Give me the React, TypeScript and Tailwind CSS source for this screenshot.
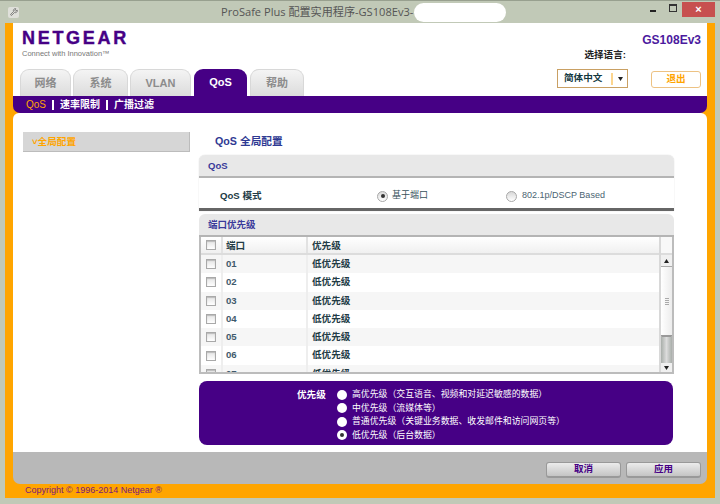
import { Wrench } from "lucide-react";

const cjk = "font-['Liberation_Sans','Noto_Sans_CJK_SC',sans-serif]";

const tabs = [
  { label: "网络", w: "w-[51px]" },
  { label: "系统", w: "w-[55px]" },
  { label: "VLAN", w: "w-[61px]" },
  { label: "QoS", w: "w-[53px] ml-[1px]", active: true },
  { label: "帮助", w: "w-[54px] ml-[1px]" },
];

const ports = ["01", "02", "03", "04", "05", "06", "07"];

const priorities = [
  { label: "高优先级（交互语音、视频和对延迟敏感的数据）" },
  { label: "中优先级（流媒体等）" },
  { label: "普通优先级（关键业务数据、收发邮件和访问网页等）" },
  { label: "低优先级（后台数据）", checked: true },
];

function Checkbox() {
  return <span className="block h-[10px] w-[10px] border border-[#a9a9a9] bg-gradient-to-b from-[#e4e4e4] to-white shadow-[inset_0_1px_1px_#bbb]" />;
}

function Radio({ checked }: { checked?: boolean }) {
  return (
    <span className="flex h-[11px] w-[11px] items-center justify-center rounded-full border border-[#a8a8a8] bg-gradient-to-b from-[#d8d8d8] to-white">
      {checked && <span className="h-[4px] w-[4px] rounded-full bg-[#333]" />}
    </span>
  );
}

function PanelHeader({ children }: { children: React.ReactNode }) {
  return (
    <div className="flex h-[23px] shrink-0 items-center rounded-t-[6px] border-b-2 border-[#b4b4b4] bg-[#e8e8e8] pl-[9px] pt-[2px] text-[9.5px] font-bold text-[#3a3a9a]">
      {children}
    </div>
  );
}

function Bevel({ children }: { children: React.ReactNode }) {
  return (
    <button className="flex h-[16px] w-[75px] items-center justify-center rounded-[3px] border border-b-2 border-[#999] bg-gradient-to-b from-[#ececec] to-[#c4c4c4] text-[9.5px] font-bold text-[#460085]">
      {children}
    </button>
  );
}

function Scrollbar() {
  return (
    <div className="flex w-[13px] flex-col border-l-2 border-[#d8d8d8] bg-[#efefef] text-[#222]">
      <div className="h-[18px] border-b-2 border-[#dcdcdc] bg-[#f8f8f8]" />
      <div className="flex h-[12px] items-center justify-center border-b border-[#aaa] bg-[#f0f0f0]">
        <svg width="5" height="4" viewBox="0 0 5 4"><path d="M2.5 0 5 4H0z" fill="#222" /></svg>
      </div>
      <div className="flex h-[70px] flex-col items-center justify-center gap-px rounded-b-[1px] border-b-2 border-[#999] bg-gradient-to-r from-white to-[#ececec]">
        <span className="h-px w-[4px] bg-[#aaa]" />
        <span className="h-px w-[4px] bg-[#aaa]" />
        <span className="h-px w-[4px] bg-[#aaa]" />
        <span className="h-px w-[4px] bg-[#aaa]" />
      </div>
      <div className="flex-1 bg-gradient-to-r from-[#a9aeaa] via-[#dcdcdc] to-[#a9aeaa]" />
      <div className="flex h-[9px] items-center justify-center bg-[#f0f0f0]">
        <svg width="5" height="4" viewBox="0 0 5 4"><path d="M0 0h5L2.5 4z" fill="#222" /></svg>
      </div>
    </div>
  );
}

export default function App() {
  return (
    <div className={`flex h-[504px] w-[720px] flex-col overflow-hidden border-t border-[#98a08f] bg-[#c1c9b7] ${cjk}`}>
      {/* title bar */}
      <div className="flex h-[22px] shrink-0 items-center pl-[8px]">
        <span className="flex h-[11px] w-[11px] items-center justify-center rounded-[2px] bg-[#dfe0da] text-[#555]">
          <Wrench size={8} />
        </span>
        <span className="ml-[202px] whitespace-nowrap font-['Open_Sans','Noto_Sans_CJK_SC',sans-serif] text-[11.1px] text-[#555]">ProSafe Plus 配置实用程序-GS108Ev3-</span>
        <span className="ml-[1px] h-[19px] w-[92px] rounded-full bg-white" />
        <div className="ml-auto mb-[6px] mr-[5px] flex items-start">
          <span className="mr-[13px] mt-[8px] h-[2px] w-[6px] bg-[#222]" />
          <span className="mr-[5px] mt-[2px] h-[8px] w-[8px] border border-t-2 border-[#333]" />
          <span className="flex h-[15px] w-[33px] items-center justify-center bg-[#c75050] text-[11px] font-bold leading-none text-white">×</span>
        </div>
      </div>

      {/* orange frame */}
      <div className="mx-[5px] flex h-[475px] flex-col bg-[#ffa500] px-[8px]">
        <div className="flex h-[73px] shrink-0 bg-white">
          <div className="flex flex-col pl-[9px]">
            <div className="mt-[7px] h-[17px] font-['Liberation_Sans',sans-serif] text-[18px] font-bold leading-[17px] tracking-[2.7px] text-[#460085] [-webkit-text-stroke:0.4px_#460085]">NETGEAR</div>
            <div className="mt-[1px] h-[11px] text-[7.5px] leading-[11px] text-[#777]">Connect with Innovation™</div>
            <div className="-ml-[2px] mt-[10px] flex gap-[2px]">
              {tabs.map((t) => (
                <div
                  key={t.label}
                  className={`flex h-[27px] items-center justify-center rounded-t-[9px] text-[11px] font-bold ${t.w} ${
                    t.active ? "bg-[#460085] text-white" : "border border-b-0 border-[#d8d8d8] bg-gradient-to-b from-[#f4f4f4] to-[#dcdcdc] text-[#8c8c8c]"
                  }`}
                >
                  {t.label}
                </div>
              ))}
            </div>
          </div>
          <div className="ml-auto flex flex-col items-end pr-[6px]">
            <div className="mt-[10px] h-[14px] text-[12px] font-bold leading-[14px] text-[#4b1a9e]">GS108Ev3</div>
            <div className="mr-[75px] mt-[2px] h-[12px] whitespace-nowrap text-[9.6px] font-bold leading-[12px] text-[#222]">选择语言:</div>
            <div className="mt-[8px] flex items-start gap-[23px]">
              <div className="flex h-[19px] w-[71px] items-center border border-[#c9a063] pl-[6px] text-[9.6px] font-bold text-[#12383f]">
                <span>简体中文</span>
                <span className="ml-[9px] h-[12px] w-[2px] bg-[#fcd58e]" />
                <svg className="ml-[5px]" width="5" height="4" viewBox="0 0 5 4"><path d="M0 0h5L2.5 4z" fill="#222" /></svg>
              </div>
              <button className="mt-[2px] flex h-[17px] w-[50px] items-center justify-center rounded-[3px] border border-[#edc283] text-[9.6px] font-bold text-[#ffa500]">退出</button>
            </div>
          </div>
        </div>

        {/* sub navigation */}
        <div className="flex h-[17px] shrink-0 items-center rounded-bl-[7px] rounded-br-[7px] bg-[#460085] pl-[13px] text-[10px] font-bold text-white">
          <span className="w-[19px] whitespace-nowrap text-[10px] font-normal text-[#ffa500]">QoS</span>
          <span className="ml-[7px] mr-[6px] h-[10px] w-[2px] bg-white" />
          <span>速率限制</span>
          <span className="mx-[6px] h-[10px] w-[2px] bg-white" />
          <span>广播过滤</span>
        </div>

        <div className="flex min-h-0 flex-1 flex-col">
          <div className="flex h-[339px] shrink-0 rounded-t-[6px] bg-white">
            {/* sidebar */}
            <div className="w-[186px] shrink-0 pl-[10px] pt-[19px]">
              <div className="flex h-[20px] w-[167px] items-center border-b border-r border-[#bcbcbc] bg-[#d6d6d6] pl-[9px] pt-[2px] text-[9.6px] font-bold text-[#ffa500]">
                ˅全局配置
              </div>
            </div>

            {/* content */}
            <div className="flex w-[475px] flex-col">
              <div className="flex h-[42px] items-start pl-[16px] pt-[20px] text-[10.7px] font-bold leading-[16px] text-[#2f3a93]">QoS 全局配置</div>

              <div className="h-[56px] rounded-t-[6px] border-b-[3px] border-[#666] shadow-[0_0_1px_#bbb]">
                <PanelHeader>QoS</PanelHeader>
                <div className="flex h-[30px] items-center bg-white pt-[6px]">
                  <span className="ml-[21px] w-[157px] text-[9.6px] font-bold text-[#223b45]">QoS 模式</span>
                  <Radio checked />
                  <span className="ml-[4px] w-[114px] text-[9px] text-[#37525c]">基于端口</span>
                  <Radio />
                  <span className="ml-[5px] text-[9px] text-[#4a6472]">802.1p/DSCP Based</span>
                </div>
              </div>

              <div className="mt-[3px] flex h-[160px] flex-col rounded-t-[6px] border-b-2 border-[#bcbcbc]">
                <PanelHeader>端口优先级</PanelHeader>
                <div className="flex min-h-0 flex-1 border-l-2 border-r-2 border-[#bcbcbc]">
                  <div className="min-w-0 flex-1 overflow-hidden">
                    <div className="flex h-[18px] items-center border-b-2 border-[#dcdcdc] bg-gradient-to-b from-white to-[#f0f0f0] text-[9.6px] font-bold text-[#223b45]">
                      <div className="flex w-[20px] justify-center"><Checkbox /></div>
                      <div className="h-full w-[2px] bg-[#e2e2e2]" />
                      <div className="w-[83px] pl-[3px] pt-[2px]">端口</div>
                      <div className="h-full w-[2px] bg-[#e2e2e2]" />
                      <div className="pl-[4px] pt-[2px]">优先级</div>
                    </div>
                    {ports.map((p, i) => (
                      <div key={p} className={`flex h-[18.3px] items-center text-[9.6px] font-bold text-[#223b45] ${i % 2 === 0 ? "bg-[#f6f6f6]" : "bg-white"}`}>
                        <div className="flex w-[20px] justify-center"><Checkbox /></div>
                        <div className="h-full w-[2px] bg-[#eeeeee]" />
                        <div className="w-[83px] pl-[3px] text-[#3f5a6c]">{p}</div>
                        <div className="h-full w-[2px] bg-[#eeeeee]" />
                        <div className="pl-[4px]">低优先级</div>
                      </div>
                    ))}
                  </div>
                  <Scrollbar />
                </div>
              </div>

              {/* priority legend */}
              <div className="mt-[7px] flex h-[64px] w-[474px] items-start rounded-[8px] bg-[#460085] pl-[98px] pt-[7px] text-white">
                <span className="w-[40px] text-[9.6px] font-bold leading-[13.5px]">优先级</span>
                <div className="flex flex-col">
                  {priorities.map((p) => (
                    <div key={p.label} className="flex h-[13.5px] items-center gap-[5px] text-[8.9px]">
                      <span className="flex h-[10px] w-[10px] items-center justify-center rounded-full bg-white">
                        {p.checked && <span className="h-[4px] w-[4px] rounded-full bg-[#333]" />}
                      </span>
                      <span className="whitespace-nowrap">{p.label}</span>
                    </div>
                  ))}
                </div>
              </div>
            </div>
          </div>

          {/* footer buttons */}
          <div className="flex h-[32px] shrink-0 items-start justify-end gap-[5px] rounded-b-[7px] bg-[#b8b8b8] pr-[6px] pt-[10px]">
            <Bevel>取消</Bevel>
            <Bevel>应用</Bevel>
          </div>

          {/* copyright strip */}
          <div className="flex h-[14px] shrink-0 items-center pl-[12px] text-[9px] text-[#7a1a78]">Copyright © 1996-2014 Netgear ®</div>
        </div>
      </div>
    </div>
  );
}
